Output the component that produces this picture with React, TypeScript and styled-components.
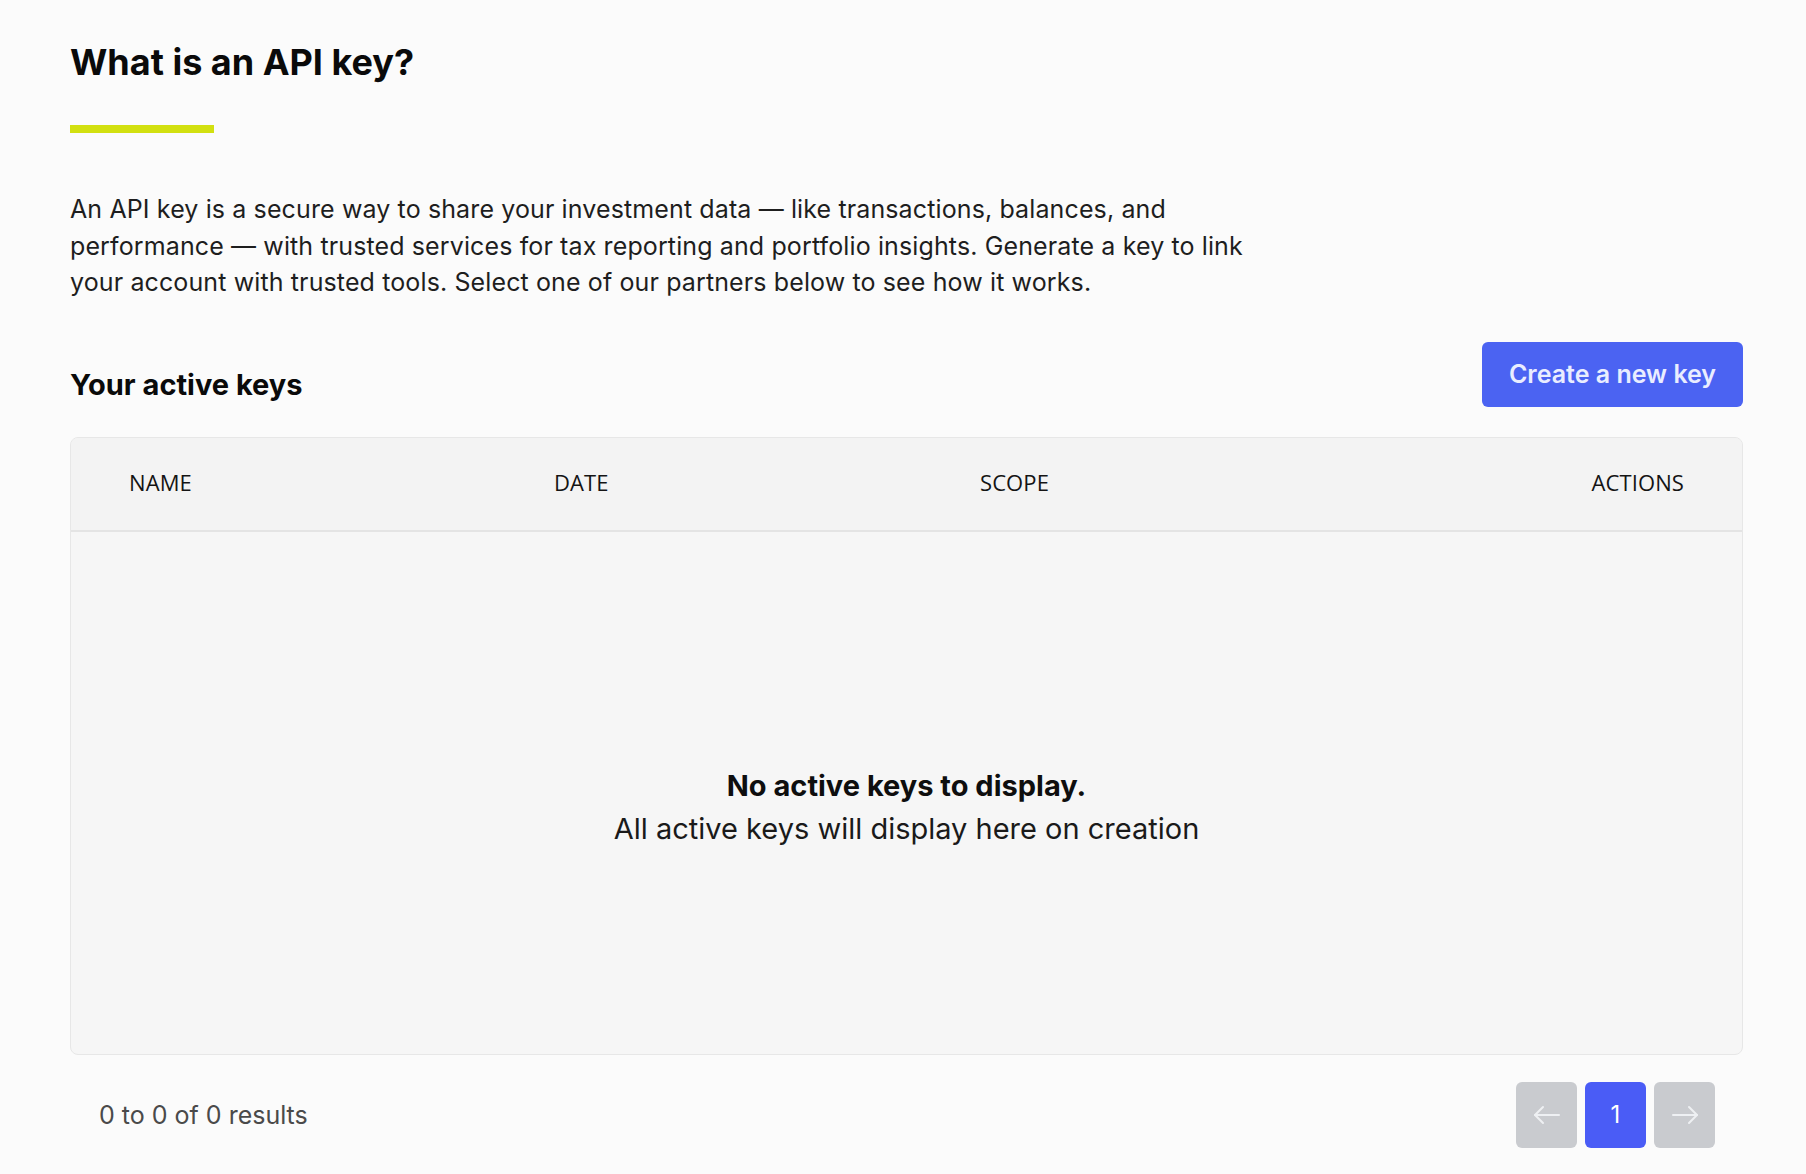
import styled, { createGlobalStyle } from "styled-components";

const GlobalStyle = createGlobalStyle`
  html, body {
    margin: 0;
    padding: 0;
    background: #fbfbfb;
    font-family: Inter, "Liberation Sans", sans-serif;
    color: #111;
  }
`;

const Page = styled.main`
  padding: 40px 63px 24px 70px;
`;

const Title = styled.h1`
  margin: 0;
  font-size: 36px;
  font-weight: 700;
  line-height: 44px;
  color: #0a0a0a;
`;

const Accent = styled.div`
  width: 144px;
  height: 8px;
  background: #d2e010;
  margin-top: 41px;
`;

const Intro = styled.p`
  margin: 58px 0 0;
  max-width: 1210px;
  font-size: 25px;
  line-height: 36.5px;
  letter-spacing: 0.12px;
  color: #1e1e1e;
`;

const SectionHead = styled.div`
  display: flex;
  align-items: center;
  justify-content: space-between;
  margin-top: 41px;
`;

const SectionTitle = styled.h2`
  margin: 20px 0 0;
  font-size: 29px;
  font-weight: 700;
  color: #0a0a0a;
`;

const PrimaryButton = styled.button`
  width: 261px;
  height: 65px;
  border: none;
  border-radius: 6px;
  background: #4b63f2;
  color: #e9edff;
  font-family: Inter, "Liberation Sans", sans-serif;
  font-size: 25px;
  font-weight: 600;
  cursor: pointer;
`;

const Table = styled.div`
  margin-top: 30px;
  border: 1px solid #e7e7e7;
  border-radius: 8px;
  background: #f6f6f6;
  overflow: hidden;
`;

const HeadRow = styled.div`
  display: grid;
  grid-template-columns: 425px 426px 1fr auto;
  align-items: center;
  height: 94px;
  padding: 0 58px 4px;
  box-sizing: border-box;
  background: #f3f3f3;
  border-bottom: 2px solid #e4e4e4;
`;

const HeadCell = styled.div`
  font-family: "Open Sans", "Noto Sans", sans-serif;
  font-size: 22px;
  color: #141414;
  letter-spacing: 0.1px;
`;

const Empty = styled.div`
  height: 522px;
  display: flex;
  flex-direction: column;
  align-items: center;
  justify-content: center;
  padding-top: 30px;
  box-sizing: border-box;
  text-align: center;
`;

const EmptyTitle = styled.div`
  font-size: 29px;
  font-weight: 700;
  line-height: 42px;
  color: #0e0e0e;
`;

const EmptyText = styled.div`
  font-size: 29px;
  line-height: 44px;
  color: #1a1a1a;
`;

const Footer = styled.div`
  display: flex;
  align-items: center;
  justify-content: space-between;
  padding: 27px 28px 0 29px;
`;

const Results = styled.div`
  font-size: 25px;
  color: #4a4a4a;
`;

const Pager = styled.div`
  display: flex;
  gap: 8px;
`;

const PageButton = styled.button<{ $active?: boolean }>`
  width: 61px;
  height: 66px;
  border: none;
  border-radius: 6px;
  display: flex;
  align-items: center;
  justify-content: center;
  background: ${(p) => (p.$active ? "#4a5cf6" : "#c9cbcf")};
  color: #fff;
  font-family: Inter, "Liberation Sans", sans-serif;
  font-size: 24px;
  padding: 0;
`;

const Arrow = ({ dir }: { dir: "left" | "right" }) => (
  <svg width="28" height="20" viewBox="0 0 28 20" fill="none" stroke="#eef0f3" strokeWidth="2" strokeLinecap="round" strokeLinejoin="round">
    {dir === "left" ? (
      <>
        <path d="M26 10H2" />
        <path d="M10 2L2 10l8 8" />
      </>
    ) : (
      <>
        <path d="M2 10h24" />
        <path d="M18 2l8 8-8 8" />
      </>
    )}
  </svg>
);

export default function App() {
  return (
    <>
      <GlobalStyle />
      <Page>
        <Title>What is an API key?</Title>
        <Accent />
        <Intro>
          An API key is a secure way to share your investment data — like transactions, balances, and
          performance — with trusted services for tax reporting and portfolio insights. Generate a key to link
          your account with trusted tools. Select one of our partners below to see how it works.
        </Intro>
        <SectionHead>
          <SectionTitle>Your active keys</SectionTitle>
          <PrimaryButton>Create a new key</PrimaryButton>
        </SectionHead>
        <Table>
          <HeadRow>
            <HeadCell>NAME</HeadCell>
            <HeadCell>DATE</HeadCell>
            <HeadCell>SCOPE</HeadCell>
            <HeadCell>ACTIONS</HeadCell>
          </HeadRow>
          <Empty>
            <EmptyTitle>No active keys to display.</EmptyTitle>
            <EmptyText>All active keys will display here on creation</EmptyText>
          </Empty>
        </Table>
        <Footer>
          <Results>0 to 0 of 0 results</Results>
          <Pager>
            <PageButton aria-label="Previous page">
              <Arrow dir="left" />
            </PageButton>
            <PageButton $active>1</PageButton>
            <PageButton aria-label="Next page">
              <Arrow dir="right" />
            </PageButton>
          </Pager>
        </Footer>
      </Page>
    </>
  );
}
